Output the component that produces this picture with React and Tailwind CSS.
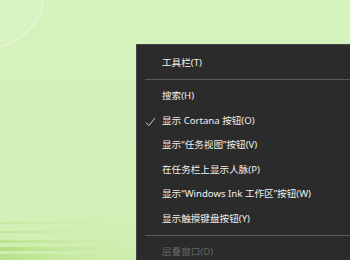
const items = [
  { label: '搜索(H)' },
  { label: '显示 Cortana 按钮(O)', checked: true },
  { label: '显示“任务视图”按钮(V)' },
  { label: '在任务栏上显示人脉(P)' },
  { label: '显示“Windows Ink 工作区”按钮(W)' },
  { label: '显示触摸键盘按钮(Y)' },
];

const Check = () => (
  <svg width="11" height="10" viewBox="0 0 11 10" className="absolute left-[8px] top-[8px]">
    <path d="M1 5.5 L3.8 8.5 L10 1" fill="none" stroke="#cfcfcf" strokeWidth="1" />
  </svg>
);

const Item = ({ children, checked, disabled }) => (
  <div
    className={`relative flex items-center h-[24.6px] pl-[25px] text-[9.6px] whitespace-nowrap ${
      disabled ? 'text-[#666]' : 'text-[#f0f0f0]'
    }`}
  >
    {checked && <Check />}
    {children}
  </div>
);

const Separator = () => (
  <div className="flex items-center h-[8.4px] pl-[8px]">
    <div className="h-px w-full bg-[#5a5a5a]" />
  </div>
);

const Wallpaper = () => (
  <svg width="350" height="260" className="absolute inset-0">
    <defs>
      <linearGradient id="bg" x1="0" y1="0" x2="0" y2="1">
        <stop offset="0" stopColor="#d6f2bd" />
        <stop offset="0.8" stopColor="#d4f0b9" />
        <stop offset="1" stopColor="#cdeead" />
      </linearGradient>
      <linearGradient id="rip" x1="0" y1="0" x2="1" y2="0">
        <stop offset="0" stopColor="#a8d86f" />
        <stop offset="1" stopColor="#c9eaa6" stopOpacity="0" />
      </linearGradient>
    </defs>
    <rect width="350" height="260" fill="url(#bg)" />
    <circle cx="-12" cy="-8" r="56" fill="#dcf4c9" opacity="0.5" stroke="#f4fbef" strokeWidth="1.5" />
    <rect x="0" y="222" width="140" height="2" fill="url(#rip)" opacity="0.3" />
    <rect x="0" y="231" width="140" height="2" fill="url(#rip)" opacity="0.4" />
    <rect x="0" y="240" width="140" height="3" fill="url(#rip)" opacity="0.55" />
    <rect x="0" y="247" width="140" height="4" fill="url(#rip)" opacity="0.75" />
    <rect x="0" y="254" width="140" height="6" fill="url(#rip)" opacity="0.6" />
  </svg>
);

export default function App() {
  return (
    <div
      className="relative w-[350px] h-[260px] overflow-hidden"
      style={{ fontFamily: '"Noto Sans", "Noto Sans CJK SC", sans-serif' }}
    >
      <Wallpaper />
      <div className="absolute left-[136px] top-[44px] w-[240px] h-[240px] bg-[#2b2b2b] border border-[#444] pt-[6px]">
        <Item>工具栏(T)</Item>
        <Separator />
        {items.map((item, index) => (
          <Item key={index} checked={item.checked}>
            {item.label}
          </Item>
        ))}
        <Separator />
        <Item disabled>层叠窗口(D)</Item>
      </div>
    </div>
  );
}
